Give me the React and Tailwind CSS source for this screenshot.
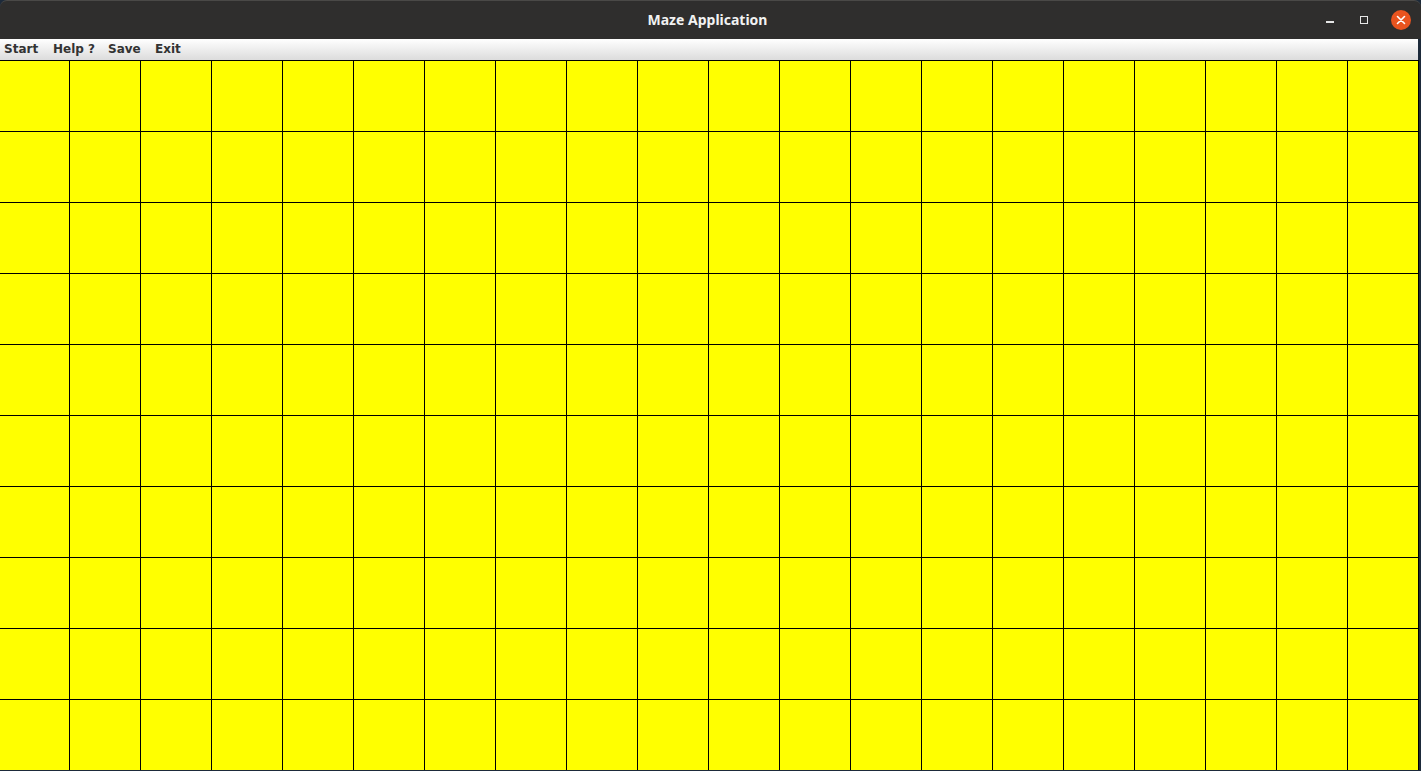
const cols = Array.from({ length: 20 }, (_, i) => i)
const rows = Array.from({ length: 10 }, (_, i) => i)

export default function App() {
  return (
    <div className="w-[1421px] h-[771px] overflow-hidden bg-[#1d2a3a] flex flex-col">

      {/* Title bar */}
      <div className="relative h-[39px] shrink-0 bg-[#2f2e2d] rounded-t-[7px] border-t border-[#4a4947] flex items-center justify-center">
        <span className="text-[14px] font-bold text-[#f2f2f2] font-['Noto_Sans',sans-serif] pb-[1px] pr-[6px]">
          Maze Application
        </span>
        <div className="absolute right-[10px] top-0 h-full flex items-center gap-[21px]">
          <div className="w-[13px] h-[13px] flex items-center justify-center pt-[4px]">
            <div className="w-[8px] h-[1.5px] bg-[#e6e6e6]" />
          </div>
          <div className="w-[13px] h-[13px] flex items-center justify-center">
            <div className="w-[8px] h-[8px] border border-[#e6e6e6]" />
          </div>
          <div className="w-[20px] h-[20px] rounded-full bg-[#e9541f] flex items-center justify-center">
            <svg width="10" height="10" viewBox="0 0 10 10">
              <path d="M1.5 1.5 L8.5 8.5 M8.5 1.5 L1.5 8.5" stroke="#fff" strokeWidth="1.6" strokeLinecap="round" />
            </svg>
          </div>
        </div>
      </div>

      {/* Menu bar */}
      <div className="h-[21px] shrink-0 mr-[3px] bg-gradient-to-b from-[#ffffff] to-[#dcdcdc] flex items-center pb-[2px] font-['DejaVu_Sans',sans-serif] text-[12px] font-bold text-[#333333]">
        <span className="pl-[4px] w-[53px]">Start</span>
        <span className="w-[55px]">Help ?</span>
        <span className="w-[47px]">Save</span>
        <span>Exit</span>
      </div>

      {/* Maze grid */}
      <div className="grid grid-cols-[70px_repeat(19,71px)] grid-rows-[repeat(10,71px)] w-[1419px] bg-[#ffff00]">
        {rows.map(r =>
          cols.map(c => (
            <div key={`${r}-${c}`} className="border-t border-r border-black" />
          ))
        )}
      </div>
    </div>
  )
}
